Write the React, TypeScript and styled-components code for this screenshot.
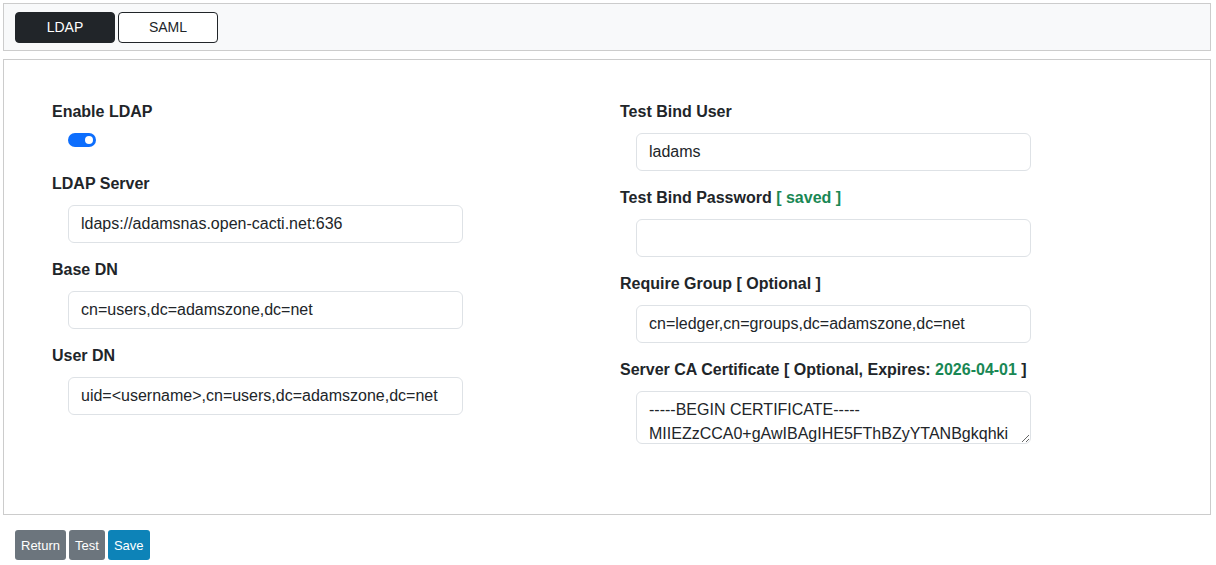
import React, { FC } from 'react';
import styled, { createGlobalStyle } from 'styled-components';

const GlobalStyle = createGlobalStyle`
  body {
    margin: 0;
    font-family: "Liberation Sans", Arial, sans-serif;
    color: #212529;
    background: #fff;
  }
`;

const Page = styled.div`
  padding: 3px 5px 0 3px;
`;

const TabBar = styled.div`
  background: #f8f9fa;
  border: 1px solid #ccc;
  height: 46px;
  display: flex;
  align-items: center;
  gap: 3px;
  padding: 0 11px;
`;

const Tab = styled.button<{ $active?: boolean }>`
  width: 100px;
  height: 31px;
  border-radius: 4px;
  font: 14px "Liberation Sans", Arial, sans-serif;
  border: 1px solid #212529;
  background: ${(p) => (p.$active ? '#212529' : '#fff')};
  color: ${(p) => (p.$active ? '#fff' : '#212529')};
`;

const Panel = styled.div`
  margin-top: 8px;
  border: 1px solid #ccc;
  height: 456px;
  padding: 40px 0 0 48px;
  box-sizing: border-box;
  display: grid;
  grid-template-columns: 568px 1fr;
  align-items: start;
`;

const Column = styled.div`
  display: flex;
  flex-direction: column;
`;

const Field = styled.div`
  display: flex;
  flex-direction: column;
  height: 86px;
`;

const Label = styled.div`
  font-weight: bold;
  font-size: 16px;
  line-height: 24px;
  margin-bottom: 9px;
`;

const Green = styled.span`
  color: #198754;
`;

const Input = styled.input`
  margin-left: 16px;
  width: 395px;
  height: 38px;
  box-sizing: border-box;
  border: 1px solid #dee2e6;
  border-radius: 6px;
  padding: 0 12px;
  font: 16px "Liberation Sans", Arial, sans-serif;
  color: #212529;
`;

const TextArea = styled.textarea`
  margin-left: 16px;
  width: 395px;
  height: 86px;
  box-sizing: border-box;
  border: 1px solid #dee2e6;
  border-radius: 6px;
  padding: 6px 12px;
  font: 16px/24px "Liberation Sans", Arial, sans-serif;
  color: #212529;
  overflow: hidden;
`;

const Switch = styled.span`
  margin: 0 0 0 16px;
  width: 28px;
  height: 14px;
  border-radius: 7px;
  background: #0d6efd;
  position: relative;
  &::after {
    content: '';
    position: absolute;
    right: 3px;
    top: 3px;
    width: 8px;
    height: 8px;
    border-radius: 50%;
    background: #fff;
  }
`;

const Actions = styled.div`
  display: flex;
  gap: 3px;
  padding: 15px 0 0 12px;
`;

const ActionButton = styled.button<{ $color: string }>`
  height: 30px;
  padding: 0 6px;
  border: none;
  border-radius: 3px;
  background: ${(p) => p.$color};
  color: #fff;
  font: 13px "Liberation Sans", Arial, sans-serif;
  margin-right: ${(p) => (p.$color === '#6c757d' ? '0' : '0')};
`;

const cert =
  '-----BEGIN CERTIFICATE-----\nMIIEZzCCA0+gAwIBAgIHE5FThBZyYTANBgkqhki\nG9w0BAQsFADCBozELMAkGA1UE\nBhMCVVMxETAPBgNVBAgMCFZpcmdpbmlhMRAw';

const App: FC = () => (
  <Page>
    <GlobalStyle />
    <TabBar>
      <Tab $active>LDAP</Tab>
      <Tab>SAML</Tab>
    </TabBar>
    <Panel>
      <Column>
        <Field style={{ height: 72 }}>
          <Label>Enable LDAP</Label>
          <Switch />
        </Field>
        <Field>
          <Label>LDAP Server</Label>
          <Input defaultValue="ldaps://adamsnas.open-cacti.net:636" />
        </Field>
        <Field>
          <Label>Base DN</Label>
          <Input defaultValue="cn=users,dc=adamszone,dc=net" />
        </Field>
        <Field>
          <Label>User DN</Label>
          <Input defaultValue="uid=<username>,cn=users,dc=adamszone,dc=net" />
        </Field>
      </Column>
      <Column>
        <Field>
          <Label>Test Bind User</Label>
          <Input defaultValue="ladams" />
        </Field>
        <Field>
          <Label>
            Test Bind Password <Green>[ saved ]</Green>
          </Label>
          <Input type="password" />
        </Field>
        <Field>
          <Label>Require Group [ Optional ]</Label>
          <Input defaultValue="cn=ledger,cn=groups,dc=adamszone,dc=net" />
        </Field>
        <Field>
          <Label>
            Server CA Certificate [ Optional, Expires: <Green>2026-04-01</Green> ]
          </Label>
          <TextArea defaultValue={cert} />
        </Field>
      </Column>
    </Panel>
    <Actions>
      <ActionButton $color="#6c757d">Return</ActionButton>
      <ActionButton $color="#6c757d">Test</ActionButton>
      <ActionButton $color="#0d83b8">Save</ActionButton>
    </Actions>
  </Page>
);

export default App;
